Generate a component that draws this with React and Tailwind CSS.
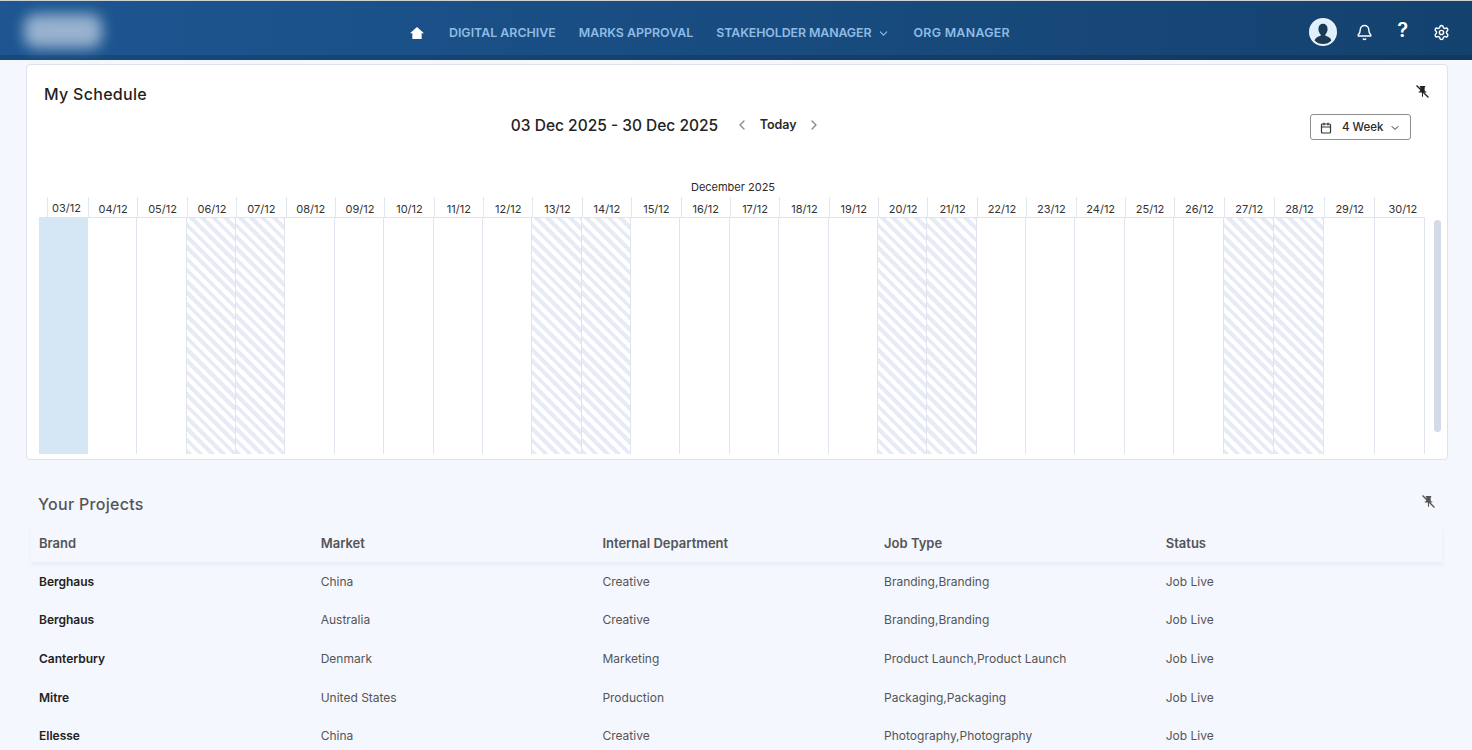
import React from "react";
import { Bell, Calendar, ChevronDown, ChevronLeft, ChevronRight, Settings } from "lucide-react";

const days = [];
for (let d = 3; d <= 30; d++) {
  days.push(String(d).padStart(2, "0") + "/12");
}
const weekend = ["06/12", "07/12", "13/12", "14/12", "20/12", "21/12", "27/12", "28/12"];

const projects = [
  ["Berghaus", "China", "Creative", "Branding,Branding", "Job Live"],
  ["Berghaus", "Australia", "Creative", "Branding,Branding", "Job Live"],
  ["Canterbury", "Denmark", "Marketing", "Product Launch,Product Launch", "Job Live"],
  ["Mitre", "United States", "Production", "Packaging,Packaging", "Job Live"],
  ["Ellesse", "China", "Creative", "Photography,Photography", "Job Live"],
];

const PinOff = ({ color }) => (
  <svg width="13" height="13" viewBox="0 0 24 24" fill={color}>
    <path d="M16 9V4h1V2H7v2h1v5c0 1.66-1.34 3-3 3v2h5.97v7l1 1 1-1v-7H19v-2c-1.66 0-3-1.34-3-3z" />
    <path d="M1 1l22 22" stroke={color} strokeWidth="2.4" />
  </svg>
);

const NavLink = ({ children, className }) => (
  <span className={`text-[12.4px] font-semibold text-[#8fbce4] whitespace-nowrap ${className || ""}`}>{children}</span>
);

// the last few columns of the calendar are a touch wider
const headCell = (i) => {
  if (i === 0) return "w-[41px] pt-[2px] pr-[3px]";
  if (i === 27) return "w-[56px] pt-[3px]";
  if (i >= 24) return "w-[50.250px] pt-[3px]";
  return "w-[49.375px] pt-[3px]";
};

const gridCell = (d, i) => {
  if (i === 0) return "w-[48.900px] flex-none bg-[#d5e7f4]";
  const width = i < 24 ? "w-[49.375px] flex-none" : "flex-1";
  if (weekend.includes(d)) {
    return `${width} border-t border-r border-[#dfe4ef] bg-[repeating-linear-gradient(45deg,#e6ebf6_0,#e6ebf6_4px,#ffffff_4px,#ffffff_8px)]`;
  }
  return `${width} border-t border-r border-[#dfe4ef] bg-white`;
};

const App = () => {
  return (
    <div className="h-[750px] overflow-hidden bg-[#f4f7fe] font-['Inter',sans-serif]">
      {/* Top bar */}
      <header className="relative h-[60px] border-t border-[#cfd2d4] bg-gradient-to-r from-[#1d5692] to-[#14426f]">
        <div className="absolute inset-x-0 bottom-0 h-[5px] bg-black/15" />
        <div className="absolute left-[24px] top-[13px] h-[34px] w-[78px] rounded-xl bg-[#98b2ce] blur-[7px]" />
        <nav className="relative flex h-[55px] items-center justify-center pt-[9px] pr-[53px]">
          <svg width="16" height="16" viewBox="0 0 24 24" fill="white" className="mr-[24px]">
            <path d="M12 3L1.500 12.500H5V21h14v-8.500h3.500z" />
          </svg>
          <NavLink>DIGITAL ARCHIVE</NavLink>
          <span className="w-[23px]" />
          <NavLink>MARKS APPROVAL</NavLink>
          <span className="w-[23px]" />
          <NavLink className="tracking-[-0.1px]">STAKEHOLDER MANAGER</NavLink>
          <ChevronDown size={13} strokeWidth={2} className="ml-[6px] mr-[23px] text-[#8fbce4]" />
          <NavLink className="tracking-[0.3px]">ORG MANAGER</NavLink>
        </nav>
        <div className="absolute right-[22px] top-[17px] flex items-center">
          <div className="mr-[19px] flex h-[28px] w-[28px] items-end justify-center overflow-hidden rounded-full border-2 border-[#e6f3fb] bg-[#dff0fa]">
            <svg width="22" height="22" viewBox="0 0 24 24" fill="#1c3a55">
              <path d="M12 2c3 0 5 2.200 5 5.500 0 2.500-1 4.500-2.500 6v1.500c3 1 7 2 7.500 9H2c.5-7 4.500-8 7.500-9v-1.500C8 12 7 10 7 7.500 7 4.200 9 2 12 2z" />
            </svg>
          </div>
          <Bell size={17} color="white" strokeWidth={2} className="mr-[24px]" />
          <span className="mr-[25px] mt-[-4px] text-[20px] font-semibold leading-none text-white">?</span>
          <Settings size={17} color="white" strokeWidth={2} />
        </div>
      </header>

      {/* My Schedule */}
      <section className="relative ml-[26px] mr-[24px] mt-[4px] h-[396px] rounded border border-[#dde3ee] bg-white">
        <div className="flex items-start justify-between pl-[17px] pr-[18px] pt-[18px]">
          <h2 className="text-[16px] font-medium leading-[22px] tracking-[0.3px] text-[#1f1f1f]">My Schedule</h2>
          <span className="mt-[2px]"><PinOff color="#222222" /></span>
        </div>
        <div className="relative mt-[9px] flex h-[31px] items-start justify-center pr-[141px]">
          <span className="text-[15.5px] font-medium leading-[24px] text-[#222222]">03 Dec 2025 - 30 Dec 2025</span>
          <ChevronLeft size={16} className="ml-[16px] mt-[3px] text-[#8a8a8a]" />
          <span className="mx-[9.500px] text-[12.5px] font-semibold leading-[22px] text-[#2a2a2a]">Today</span>
          <ChevronRight size={16} className="mt-[3px] text-[#8a8a8a]" />
          <button className="absolute right-[36px] top-0 flex h-[26px] w-[101px] items-center rounded-[3px] border border-[#8e8e8e] bg-white pl-[9px] pt-[1px] text-[11.5px] font-medium text-[#2a2a2a]">
            <Calendar size={12} strokeWidth={2.4} className="mr-[10px] text-[#333333]" />
            4 Week
            <ChevronDown size={12} strokeWidth={2} className="ml-[5px]" />
          </button>
        </div>

        <div className="mt-[35px] h-[14px] pr-[8px] text-center text-[11px] leading-[14px] text-[#2a2a2a]">December 2025</div>

        {/* Day header */}
        <div className="ml-[20px] mt-[3px] flex h-[20px]">
          {days.map((d, i) => (
            <div key={d} className={`${headCell(i)} flex-none border-l border-[#e2e6ef] text-center text-[11px] leading-[18px] text-[#333333]`}>
              {d}
            </div>
          ))}
        </div>

        {/* Day grid */}
        <div className="ml-[12px] flex h-[237px] w-[1386px]">
          {days.map((d, i) => (
            <div key={d} className={gridCell(d, i)} />
          ))}
        </div>

        <div className="absolute left-[1407px] top-[155px] h-[212px] w-[7px] rounded bg-[#d3dbe8]" />
      </section>

      {/* Your Projects */}
      <section className="relative mx-[31px] mt-[32px]">
        <div className="flex items-start justify-between pl-[7px] pr-[6px]">
          <h2 className="text-[16px] font-medium leading-[24px] tracking-[0.3px] text-[#555555]">Your Projects</h2>
          <span className="mt-[3px]"><PinOff color="#555555" /></span>
        </div>
        <div className="mt-[10px] w-[1411px] shadow-[0_3px_5px_rgba(90,110,160,0.08)]">
          <div className="grid h-[36.300px] grid-cols-[repeat(5,281.700px)] items-center pl-[8px] text-[13px] font-semibold text-[#555555]">
            <span>Brand</span>
            <span>Market</span>
            <span>Internal Department</span>
            <span>Job Type</span>
            <span>Status</span>
          </div>
        </div>
        {projects.map((row, i) => (
          <div key={i} className="grid h-[38.700px] grid-cols-[repeat(5,281.700px)] items-center pl-[8px] text-[12px] text-[#555555]">
            <span className="font-semibold text-[#222222]">{row[0]}</span>
            <span>{row[1]}</span>
            <span>{row[2]}</span>
            <span>{row[3]}</span>
            <span>{row[4]}</span>
          </div>
        ))}
      </section>
    </div>
  );
};

export default App;
